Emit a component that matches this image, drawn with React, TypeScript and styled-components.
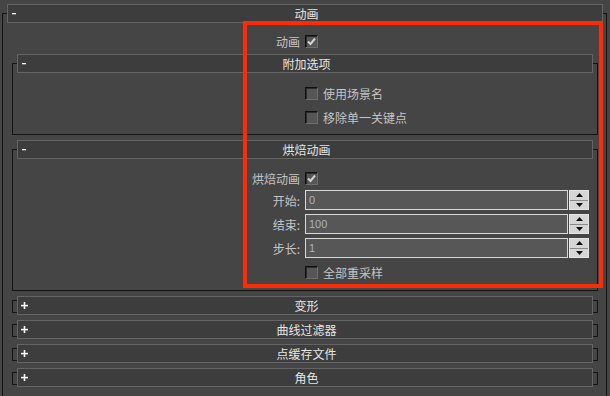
import React from 'react';
import styled, { createGlobalStyle } from 'styled-components';

const GlobalStyle = createGlobalStyle`
  html, body {
    margin: 0;
    padding: 0;
    background: #454545;
  }
  * {
    box-sizing: border-box;
  }
`;

const Panel = styled.div`
  position: relative;
  width: 610px;
  height: 396px;
  overflow: hidden;
  padding-left: 2px;
  padding-top: 13px;
  background: #454545;
  font-family: "Noto Sans CJK SC", "Noto Sans", sans-serif;
  font-size: 12px;
  color: #c4c4c4;
`;

// black bracket drawn round a rollout; the header covers the middle of its top edge
const Frame = styled.div<{ $top?: number; $left?: number; $right?: number }>`
  border: 1px solid #151515;
  margin: ${p => p.$top ?? 0}px ${p => p.$right ?? 0}px 0 ${p => p.$left ?? 0}px;
`;

const Header = styled.div<{ $right?: number; $collapsed?: boolean }>`
  display: grid;
  grid-template-columns: 16px 1fr 16px;
  align-items: center;
  height: 19px;
  margin: ${p => (p.$collapsed ? '-5px' : '-10px')} ${p => p.$right ?? 4}px
    ${p => (p.$collapsed ? '-3px' : '0')} 4px;
  padding-left: 3px;
  background: #3d3d3d;
  border: 1px solid #646464;
  color: #e6e6e6;
  line-height: 17px;
`;

const Title = styled.span`
  text-align: center;
  white-space: nowrap;
`;

const Body = styled.div<{ $top: number; $bottom: number }>`
  display: flex;
  flex-direction: column;
  padding: ${p => p.$top}px 0 ${p => p.$bottom}px 0;
`;

const Field = styled.div<{ $ctrl: number; $h?: number; $mb?: number }>`
  display: grid;
  grid-template-columns: 1fr ${p => p.$ctrl}px;
  column-gap: 5px;
  align-items: center;
  height: ${p => p.$h ?? 20}px;
  margin-bottom: ${p => p.$mb ?? 0}px;
`;

const Label = styled.span`
  text-align: right;
  white-space: nowrap;
  color: #c4c4c4;
`;

const Control = styled.div`
  display: flex;
  align-items: center;
  gap: 5px;
`;

const Box = styled.span`
  display: inline-flex;
  align-items: center;
  justify-content: center;
  width: 13px;
  height: 13px;
  flex: none;
  background: #565656;
  border: 1px solid;
  border-color: #101010 #6e6e6e #6e6e6e #101010;
  box-shadow: inset 1px 1px 0 #2c2c2c;
`;

const BoxText = styled.span`
  white-space: nowrap;
  color: #c4c4c4;
`;

const Input = styled.div`
  width: 263px;
  height: 20px;
  padding-left: 3px;
  background: #575757;
  border: 1px solid #d8d8d8;
  font-family: "Liberation Sans", Arial, sans-serif;
  font-size: 11px;
  line-height: 18px;
  color: #a9b0c6;
`;

const Spinner = styled.div`
  display: flex;
  flex-direction: column;
  gap: 1px;
  width: 20px;
  height: 20px;
  margin-left: -4px;
  background: #8a8a8a;
  border: 1px solid #e4e4e4;
`;

const SpinButton = styled.span`
  flex: 1;
  display: flex;
  align-items: center;
  justify-content: center;
  background: #d6d6d6;
`;

const Marker = styled.div`
  position: absolute;
  left: 243px;
  top: 21px;
  width: 360px;
  height: 267px;
  border: 4px solid #ff2a06;
  pointer-events: none;
`;

function Toggle({ open }: { open: boolean }) {
  if (open) {
    return (
      <svg width="7" height="7" viewBox="0 0 7 7">
        <rect x="1" y="3" width="4" height="1.3" fill="#f4f4f4" />
      </svg>
    );
  }
  return (
    <svg width="7" height="7" viewBox="0 0 7 7">
      <rect x="0" y="2.8" width="7" height="1.6" fill="#f4f4f4" />
      <rect x="2.7" y="0" width="1.6" height="7" fill="#f4f4f4" />
    </svg>
  );
}

function Check({ checked, label }: { checked?: boolean; label?: string }) {
  return (
    <Control>
      <Box>
        {checked && (
          <svg width="9" height="9" viewBox="0 0 9 9">
            <path d="M1 4.5 L3.5 7 L8 1.5" fill="none" stroke="#d2d2d2" strokeWidth="2" />
          </svg>
        )}
      </Box>
      {label && <BoxText>{label}</BoxText>}
    </Control>
  );
}

function Spin({ value }: { value: string }) {
  return (
    <Control>
      <Input>{value}</Input>
      <Spinner>
        <SpinButton>
          <svg width="7" height="4" viewBox="0 0 7 4">
            <path d="M0 4 L3.5 0 L7 4 Z" fill="#111" />
          </svg>
        </SpinButton>
        <SpinButton>
          <svg width="7" height="4" viewBox="0 0 7 4">
            <path d="M0 0 L7 0 L3.5 4 Z" fill="#111" />
          </svg>
        </SpinButton>
      </Spinner>
    </Control>
  );
}

function Collapsed({ title, top }: { title: string; top: number }) {
  return (
    <Frame $top={top} $left={9} $right={8}>
      <Header $collapsed>
        <Toggle open={false} />
        <Title>{title}</Title>
        <span />
      </Header>
    </Frame>
  );
}

export default function App() {
  return (
    <>
      <GlobalStyle />
      <Panel>
        <Frame style={{ width: 605 }}>
          <Header $right={3}>
            <Toggle open />
            <Title>动画</Title>
            <span />
          </Header>
          <Body $top={8} $bottom={0}>
            <Field $ctrl={301}>
              <Label>动画</Label>
              <Check checked />
            </Field>

            <Frame $top={12} $left={9} $right={8}>
              <Header>
                <Toggle open />
                <Title>附加选项</Title>
                <span />
              </Header>
              <Body $top={10} $bottom={7}>
                <Field $ctrl={292} $mb={4}>
                  <span />
                  <Check label="使用场景名" />
                </Field>
                <Field $ctrl={292}>
                  <span />
                  <Check label="移除单一关键点" />
                </Field>
              </Body>
            </Frame>

            <Frame $top={14} $left={9} $right={8}>
              <Header>
                <Toggle open />
                <Title>烘焙动画</Title>
                <span />
              </Header>
              <Body $top={10} $bottom={8}>
                <Field $ctrl={292} $h={18} $mb={3}>
                  <Label>烘焙动画</Label>
                  <Check checked />
                </Field>
                <Field $ctrl={292} $mb={4}>
                  <Label>开始:</Label>
                  <Spin value="0" />
                </Field>
                <Field $ctrl={292} $mb={4}>
                  <Label>结束:</Label>
                  <Spin value="100" />
                </Field>
                <Field $ctrl={292} $mb={4}>
                  <Label>步长:</Label>
                  <Spin value="1" />
                </Field>
                <Field $ctrl={292}>
                  <span />
                  <Check label="全部重采样" />
                </Field>
              </Body>
            </Frame>

            <Collapsed title="变形" top={9} />
            <Collapsed title="曲线过滤器" top={11} />
            <Collapsed title="点缓存文件" top={11} />
            <Collapsed title="角色" top={11} />
            <Body $top={40} $bottom={0} />
          </Body>
        </Frame>
        <Marker />
      </Panel>
    </>
  );
}
